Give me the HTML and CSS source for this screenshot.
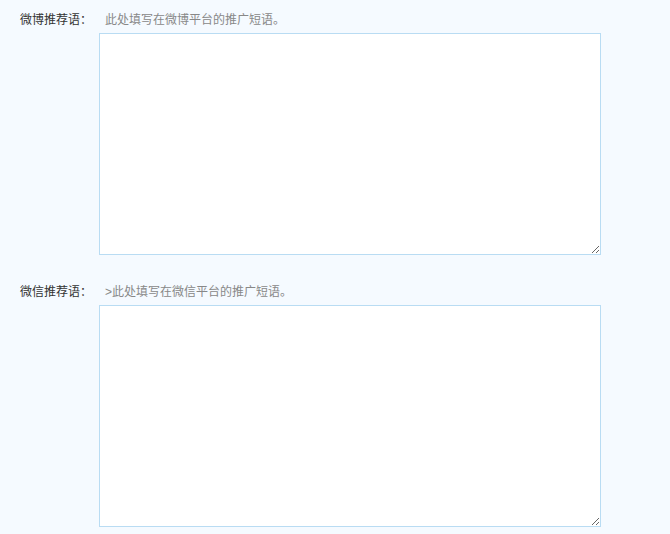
FILE: index.html
```html
<!DOCTYPE html>
<html lang="zh-CN">

<head>
    <meta charset="UTF-8">
    <meta name="viewport" content="width=device-width, initial-scale=1.0">
    <title>推荐语设置</title>
    <link rel="stylesheet" href="styles.css">
</head>

<body>
    <div class="form-item">
        <div class="item-head">
            <label class="item-label" for="weibo">微博推荐语：</label>
            <span class="item-tip">此处填写在微博平台的推广短语。</span>
        </div>
        <textarea id="weibo" class="item-text"></textarea>
    </div>
    <div class="form-item">
        <div class="item-head">
            <label class="item-label" for="weixin">微信推荐语：</label>
            <span class="item-tip">&gt;此处填写在微信平台的推广短语。</span>
        </div>
        <textarea id="weixin" class="item-text"></textarea>
    </div>
</body>

</html>
```

FILE: styles.css
```css
body {
    font-family: "Liberation Sans", "Noto Sans CJK SC", sans-serif;
    font-size: 12px;
    margin: 0;
    padding-top: 8px;
    background-color: #f5faff;
}

.form-item {
    margin-bottom: 25px;
}

.item-head {
    display: flex;
    align-items: center;
    height: 20px;
    padding-left: 20px;
}

.item-label {
    width: 85px;
    color: #333;
}

.item-tip {
    color: #888;
}

.item-text {
    display: block;
    box-sizing: border-box;
    width: 502px;
    height: 222px;
    margin: 5px 0 0 99px;
    padding: 4px;
    border: 1px solid #b9dcf3;
    background-color: #fff;
    outline: none;
}
```
